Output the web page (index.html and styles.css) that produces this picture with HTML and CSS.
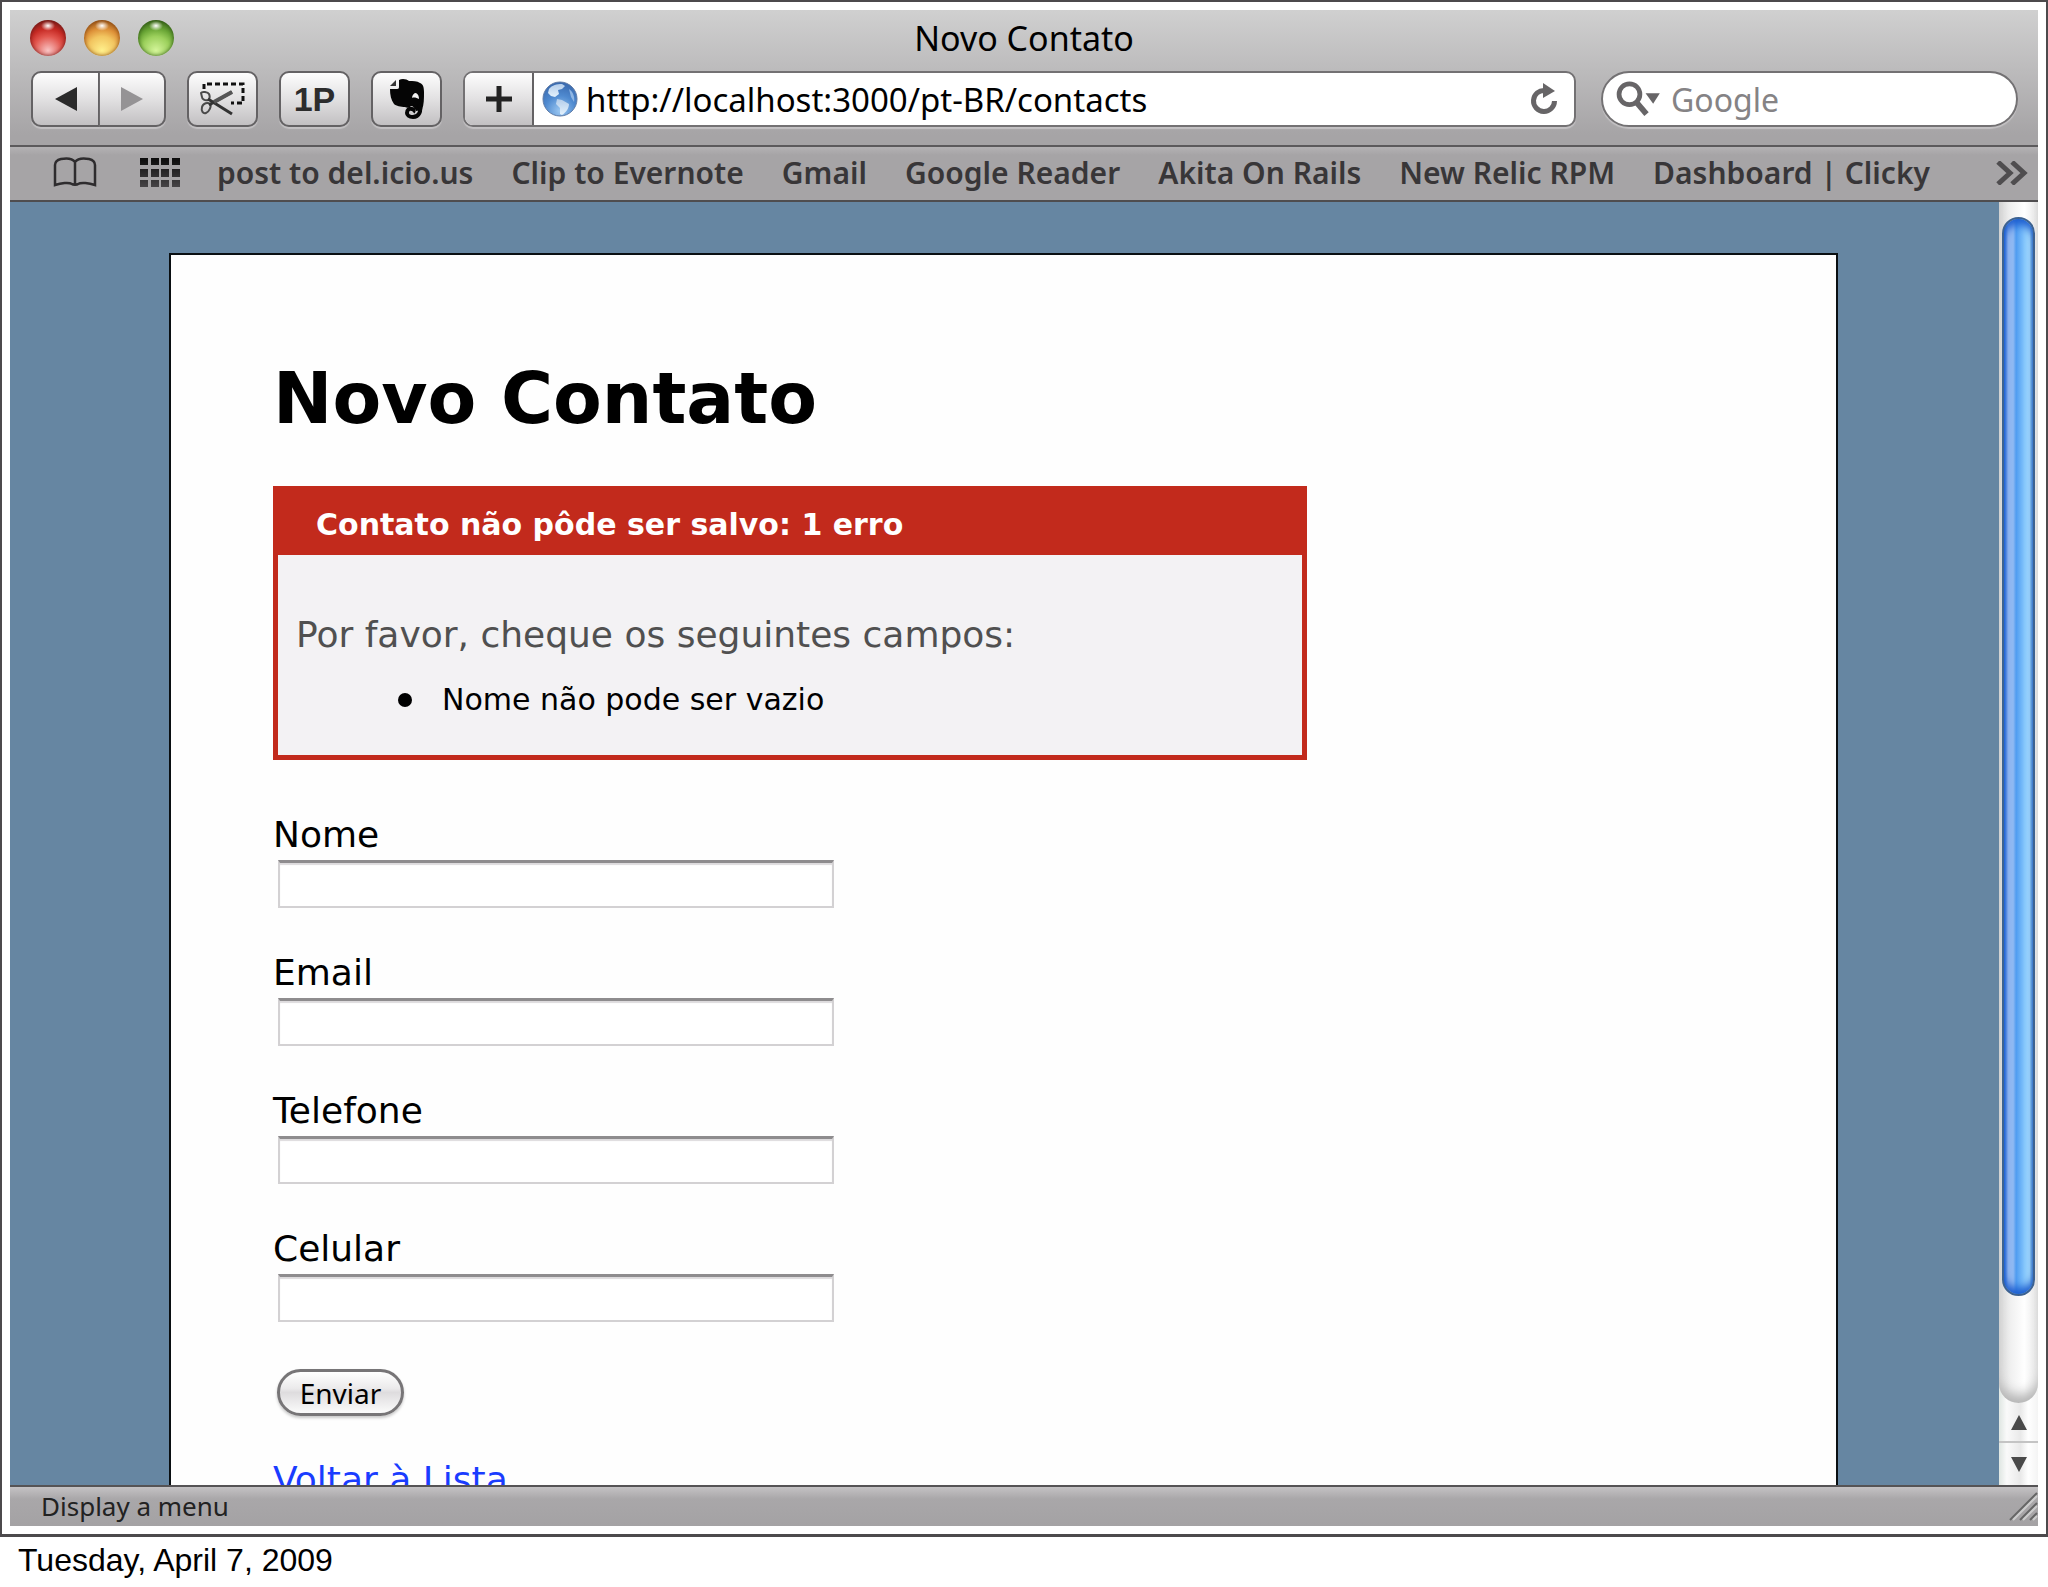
FILE: index.html
```html
<!DOCTYPE html>
<html lang="pt-BR">
<head>
<meta charset="utf-8">
<title>Novo Contato</title>
<link rel="stylesheet" href="styles.css">
</head>
<body>
<main class="slide">
  <div class="browser">
    <header class="chrome">
      <div class="titlebar">
        <div class="lights">
          <button class="light light-red" aria-label="Close"></button>
          <button class="light light-yellow" aria-label="Minimize"></button>
          <button class="light light-green" aria-label="Zoom"></button>
        </div>
        <div class="window-title">Novo Contato</div>
      </div>
      <div class="toolbar">
        <div class="nav-group">
          <button class="tool nav-back" aria-label="Back">
            <svg width="22" height="24" viewBox="0 0 22 24"><path d="M0 12 22 0v24z" fill="#2a2a2a"/></svg>
          </button>
          <button class="tool nav-forward" aria-label="Forward">
            <svg width="22" height="24" viewBox="0 0 22 24"><path d="M22 12 0 0v24z" fill="#959395"/></svg>
          </button>
        </div>
        <button class="tool" aria-label="Web clip">
          <svg width="46" height="34" viewBox="0 0 46 34" fill="none">
            <path d="M4 7V2h39v19H31" stroke="#111" stroke-width="3" stroke-dasharray="5 3"/>
            <g stroke="#4a4a4a" stroke-width="2">
              <path d="M1 11c1-2 7-1 8 1s1 5-1 6c-3 1-6-1-6-3z"/>
              <path d="M2 25c1-4 6-5 8-3s-1 8-4 9-5-2-4-6z"/>
            </g>
            <path d="M8 17 32 32M9 23 32 10" stroke="#333" stroke-width="3"/>
            <path d="M14 20 32 10" stroke="#555" stroke-width="4"/>
          </svg>
        </button>
        <button class="tool one-p">1P</button>
        <button class="tool" aria-label="Evernote">
          <svg width="36" height="42" viewBox="0 0 36 42">
            <path d="M10 2c3-2 8-1 10 1 4 0 8 0 11 2 3 1 4 4 4 9 0 7 0 12-2 18l-6 1c-1-3-3-5-5-5-2 2-4 2-6 1-4 0-9-1-11-3C2 22 1 17 1 11h7c2 0 2-1 2-3z" fill="#050505"/>
            <path d="M30 26c3 7 0 13-6 13-4 0-6-2-6-4 0-3 2-5 5-4 2 0 2 2 1 3" fill="none" stroke="#050505" stroke-width="4"/>
            <path d="M1 8 7 2v5c0 1 0 1-1 1z" fill="#333"/>
            <path d="M23 20c0-3 2-5 4-5 2 1 3 3 3 6-2-1-5-2-7-1z" fill="#f1f1f1"/>
          </svg>
        </button>
        <div class="address">
          <button class="tool add" aria-label="Add bookmark">
            <svg width="26" height="26" viewBox="0 0 26 26"><path d="M13 0v26M0 13h26" stroke="#222" stroke-width="5"/></svg>
          </button>
          <svg class="globe" width="36" height="36" viewBox="0 0 36 36" aria-hidden="true">
            <defs>
              <radialGradient id="sea" cx=".5" cy=".85" r=".9"><stop offset="0" stop-color="#9cc8f2"/><stop offset=".5" stop-color="#4f8ad0"/><stop offset="1" stop-color="#3563a8"/></radialGradient>
              <linearGradient id="land" x2="0" y2="1"><stop stop-color="#b4cdea"/><stop offset="1" stop-color="#e4f2fd"/></linearGradient>
            </defs>
            <circle cx="18" cy="18" r="17" fill="url(#sea)" stroke="#5f7ba6"/>
            <path d="M7 8c3-4 8-5 13-5l3 2-3 3-4 1 1 4-4 3-4-1-3-3z" fill="url(#land)"/>
            <path d="M15 18l5 1 7 4c0 5-4 9-7 11l-2-1v-6l-4-4z" fill="url(#land)"/>
            <path d="M27 8c4 3 6 8 5 13l-3-5z" fill="#8fb6e4"/>
          </svg>
          <input class="url" type="text" aria-label="Address" value="http://localhost:3000/pt-BR/contacts">
          <button class="reload" aria-label="Reload">
            <svg width="28" height="32" viewBox="0 0 28 32"><path d="M15 7.500A10.500 10.500 0 1 0 24.500 18" fill="none" stroke="#676567" stroke-width="5"/><path d="M13 0 25 8 13 15z" fill="#676567"/></svg>
          </button>
        </div>
        <div class="search">
          <svg width="44" height="36" viewBox="0 0 46 38" aria-hidden="true"><circle cx="14" cy="14" r="11" fill="none" stroke="#676567" stroke-width="5"/><path d="m21 22 11 13" stroke="#676567" stroke-width="6"/><path d="M31 13h15l-7 11z" fill="#676567"/></svg>
          <input class="query" type="text" aria-label="Search" placeholder="Google">
        </div>
      </div>
      <nav class="bookmarks" aria-label="Bookmarks">
        <button class="plain" aria-label="Show all bookmarks">
          <svg width="44" height="32" viewBox="0 0 44 32" fill="none" stroke="#2e2c2e" stroke-width="2.500"><path d="M22 5C19 1 13 1 8 2 4 3 2 5 2 8v20c6-2 14-3 17-1 1 1 5 1 6 0 3-2 11-1 17 1V8c0-3-2-5-6-6-5-1-11-1-14 3zM22 5v24"/></svg>
        </button>
        <button class="plain sites" aria-label="Top sites">
          <svg width="40" height="30" viewBox="0 0 40 30"><defs><linearGradient id="fade" x2="0" y2="30" gradientUnits="userSpaceOnUse"><stop stop-color="#0c0c0c"/><stop offset="1" stop-color="#484648"/></linearGradient></defs><path fill="url(#fade)" d="M0 0h8v7H0zM11 0h8v7h-8zM21 0h8v7h-8zM32 0h8v7h-8zM0 11h8v8H0zM11 11h8v8h-8zM21 11h8v8h-8zM32 11h8v8h-8zM0 22h8v7H0zM11 22h8v7h-8zM21 22h8v7h-8zM32 22h8v7h-8z"/></svg>
        </button>
        <div class="links">
          <a href="#">post to del.icio.us</a>
          <a href="#">Clip to Evernote</a>
          <a href="#">Gmail</a>
          <a href="#">Google Reader</a>
          <a href="#">Akita On Rails</a>
          <a href="#">New Relic RPM</a>
          <a href="#">Dashboard | Clicky</a>
        </div>
        <button class="plain" aria-label="More bookmarks">
          <svg width="32" height="24" viewBox="0 0 32 24" fill="none" stroke="#4f4d4f" stroke-width="5"><path d="m2 1 12 11L2 23M16 1l12 11-12 11"/></svg>
        </button>
      </nav>
    </header>

    <div class="viewport">
      <div class="canvas">
        <div class="page">
          <h1>Novo Contato</h1>
          <section class="error">
            <h2>Contato não pôde ser salvo: 1 erro</h2>
            <p>Por favor, cheque os seguintes campos:</p>
            <ul><li>Nome não pode ser vazio</li></ul>
          </section>
          <form class="form">
            <div class="field"><label for="nome">Nome</label><input id="nome" type="text"></div>
            <div class="field"><label for="email">Email</label><input id="email" type="text"></div>
            <div class="field"><label for="telefone">Telefone</label><input id="telefone" type="text"></div>
            <div class="field"><label for="celular">Celular</label><input id="celular" type="text"></div>
            <button class="submit" type="button">Enviar</button>
          </form>
          <a class="back" href="#">Voltar à Lista</a>
        </div>
      </div>
      <div class="scrollbar">
        <div class="track"><div class="thumb"></div></div>
        <button class="arrow arrow-up" aria-label="Scroll up"><svg width="16" height="15" viewBox="0 0 16 15"><path d="M8 0l8 15H0z" fill="#4a4a4a"/></svg></button>
        <button class="arrow" aria-label="Scroll down"><svg width="16" height="15" viewBox="0 0 16 15"><path d="M0 0h16L8 15z" fill="#4a4a4a"/></svg></button>
      </div>
    </div>

    <footer class="status">
      <span>Display a menu</span>
      <svg width="30" height="30" viewBox="0 0 30 30" fill="none" stroke-width="2" aria-hidden="true"><path d="M2 29 29 2M12 29 29 12M22 29l7-7" stroke="#666"/><path d="M5 29 29 5M15 29l14-14M25 29l4-4" stroke="#ccc"/></svg>
    </footer>
  </div>
</main>
<p class="caption">Tuesday, April 7, 2009</p>
</body>
</html>
```
FILE: styles.css
```css
* { box-sizing: border-box; }

body {
  margin: 0;
  height: 100vh;
  display: flex;
  flex-direction: column;
  background: #fff;
  color: #000;
  font-family: "DejaVu Sans", Verdana, sans-serif;
}

button, input { font: inherit; margin: 0; padding: 0; border: 0; background: none; color: inherit; outline: none; }
svg { display: block; flex: none; }

.slide {
  flex: 1;
  min-height: 0;
  display: flex;
  padding: 8px;
  border: 2px solid #4c4a4c;
  border-bottom-width: 3px;
}

.browser { flex: 1; min-width: 0; display: flex; flex-direction: column; }

/* Window chrome */
.chrome, .status, .submit { font-family: "Noto Sans", "Lucida Grande", sans-serif; }
.chrome { background: linear-gradient(#d0d0d0, #bcbbbc 60px, #a6a4a6 125px); }

.titlebar { display: grid; grid-template-columns: 1fr auto 1fr; align-items: center; height: 55px; padding: 0 20px; }
.window-title { font-size: 34px; line-height: 54px; }

.lights { display: flex; gap: 18px; }
.light { width: 36px; height: 36px; border-radius: 50%; }
.light-red {
  background: radial-gradient(ellipse 7px 5px at 50% 16%, #fff, transparent), radial-gradient(circle at 50% 85%, #f9c4c4, #e2574f 40%, #c62a24 62%, #5e1512 100%);
  box-shadow: inset 0 0 4px #6b1a18;
}
.light-yellow {
  background: radial-gradient(ellipse 7px 5px at 50% 16%, #fff, transparent), radial-gradient(circle at 50% 85%, #fff08c, #f2c560 40%, #dd9038 62%, #7a3a0c 100%);
  box-shadow: inset 0 0 4px #85460f;
}
.light-green {
  background: radial-gradient(ellipse 7px 5px at 50% 16%, #fff, transparent), radial-gradient(circle at 50% 85%, #d4f59a, #9cd05c 40%, #69a535 62%, #23470d 100%);
  box-shadow: inset 0 0 4px #2d5514;
}

.toolbar { display: flex; gap: 21px; padding: 6px 20px 18px 21px; border-bottom: 2px solid #5c5a5c; }
.tool {
  display: flex;
  align-items: center;
  justify-content: center;
  width: 71px;
  height: 56px;
  border: 2px solid #646264;
  border-radius: 10px;
  background: linear-gradient(#fdfdfd, #e2e1e2 50%, #c2c0c2);
  box-shadow: 0 2px 1px #c4c2c4;
}
.nav-group { display: flex; }
.nav-back { width: 69px; border-radius: 10px 0 0 10px; }
.nav-forward { width: 66px; border-left: 0; border-radius: 0 10px 10px 0; }
.one-p { font-family: "Liberation Sans", Arial, sans-serif; font-size: 34px; font-weight: 700; color: #2c2c2c; }

.address {
  flex: 1;
  display: flex;
  align-items: center;
  height: 56px;
  margin-right: 4px;
  border: 2px solid #737173;
  border-radius: 10px;
  background: #fff;
  box-shadow: 0 2px 1px #c4c2c4;
}
.add { height: 52px; width: 69px; border-width: 0 2px 0 0; border-radius: 8px 0 0 8px; box-shadow: none; }
.globe { margin: 0 8px; }
.url { flex: 1; min-width: 0; height: 50px; font-size: 33px; }
.reload { margin-right: 16px; }

.search {
  display: flex;
  align-items: center;
  gap: 11px;
  width: 417px;
  height: 56px;
  padding: 0 13px;
  border: 2px solid #737173;
  border-radius: 28px;
  background: #fff;
  box-shadow: 0 2px 1px #c4c2c4;
}
.query { flex: 1; min-width: 0; height: 50px; font-size: 32px; }
.query::placeholder { color: #858385; opacity: 1; }

.bookmarks {
  display: flex;
  align-items: center;
  height: 55px;
  padding: 0 10px 2px 43px;
  background: linear-gradient(#b4b2b4, #a6a4a6 8px, #a6a4a6);
  border-bottom: 2px solid #4f4d4f;
}
.sites { margin-left: 43px; }
.links { flex: 1; display: flex; justify-content: space-between; margin: 0 66px 0 37px; white-space: nowrap; }
.links a { color: #383638; font-size: 30px; font-weight: 600; line-height: 48px; text-decoration: none; }

/* Page */
.viewport { flex: 1; min-height: 0; display: flex; }
.canvas { flex: 1; min-width: 0; padding: 51px 161px 0 159px; overflow: hidden; background: #6686a2; }
.page { min-height: 100%; padding: 102px 102px 40px; border: 2px solid #0a0f12; border-bottom: 0; background: #fefefe; }

h1 { margin: 0 0 45px; font-size: 71px; line-height: 84px; }

.error { max-width: 1034px; margin-bottom: 53px; padding-bottom: 37px; border: 5px solid #c22a1c; background: #f3f2f4; }
.error h2 { margin: 0; padding: 4px 38px 0; background: #c22a1c; color: #fff; font-size: 30px; line-height: 60px; }
.error p { margin: 58px 18px 25px; color: #505050; font-size: 36px; line-height: 44px; }
.error ul { margin: 0; padding-left: 120px; font-size: 30px; line-height: 36px; list-style: none; }
.error li { display: flex; align-items: center; gap: 30px; }
.error li::before { content: ""; width: 14px; height: 14px; border-radius: 50%; background: #000; }

.form { display: flex; flex-direction: column; gap: 43px; margin-bottom: 42px; }
.field { display: flex; flex-direction: column; gap: 3px; }
.field label { font-size: 36px; line-height: 44px; }
.field input {
  width: 556px;
  max-width: 100%;
  height: 48px;
  margin-left: 5px;
  padding: 0 8px;
  border: 2px solid #d3d1d3;
  border-top: 3px solid #8e8c8e;
  background: #fff;
  box-shadow: inset 0 2px 1px #dddbdd;
  font-size: 30px;
}
.submit {
  align-self: flex-start;
  width: 127px;
  height: 47px;
  margin: 4px 0 0 4px;
  border: 3px solid #777577;
  border-radius: 24px;
  background: linear-gradient(#fff, #ebeaeb 40%, #dedcde 50%, #fbfbfb);
  box-shadow: 0 2px 3px #c8c8c8;
  font-size: 28px;
  line-height: 38px;
}
.back { color: #1a3cff; font-size: 36px; line-height: 44px; }

/* Scrollbar */
.scrollbar { display: flex; flex-direction: column; width: 39px; background: linear-gradient(90deg, #dfe6e2, #fafafa 20%, #e9e9e9 55%, #fff 75%, #f4f4f4); }
.track {
  flex: 1;
  padding: 15px 3px 0;
  border-radius: 0 0 20px 20px;
  background: linear-gradient(90deg, #d8d8d8, #f0f0f0 30%, #fff 65%, #e6e6e6);
  box-shadow: inset 0 -12px 12px -4px #b5b5b5;
}
.thumb {
  height: 91%;
  border: 2px solid #3d6291;
  border-radius: 17px;
  background: linear-gradient(90deg, #1f62d8, #9bbcf0 14%, #8db8f2 32%, #4f9cf0 42%, #79bdfa 65%, #aee4ff 88%, #5b92c4);
  box-shadow: inset 0 8px 8px -2px #1e5fd0, inset 0 -8px 8px -2px #1e5fd0;
}
.arrow { display: flex; align-items: center; justify-content: center; height: 42px; }
.arrow-up { height: 40px; border-bottom: 2px solid #c4c4c4; }

.status {
  display: flex;
  align-items: center;
  justify-content: space-between;
  height: 41px;
  padding: 0 0 2px 31px;
  border-top: 2px solid #555355;
  background: linear-gradient(#c4c2c4, #a9a7a9 12px, #a4a2a4);
  color: #222;
  font-size: 26px;
}

.caption { margin: 0; padding: 0 18px 4px; font-family: "Liberation Sans", Helvetica, sans-serif; font-size: 32px; line-height: 46px; }
```
